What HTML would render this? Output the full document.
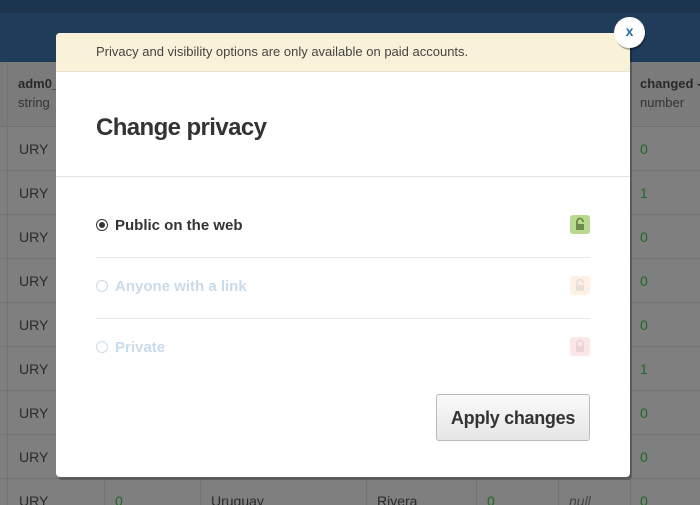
<!DOCTYPE html>
<html style="background:#7f7f7f"><head><meta charset="utf-8"><style>
*{margin:0;padding:0;box-sizing:border-box}
html,body{width:700px;height:505px;overflow:hidden}
body{position:relative;font-family:"Liberation Sans",Arial,sans-serif;background:#7f7f7f}
#w{position:absolute;left:0;top:0;width:700px;height:505px;overflow:hidden;background:#7f7f7f}
.top{position:absolute;left:0;top:0;width:700px;height:62px;background:#1f3c5a;border-top:13px solid #1b3550}
.hdr{position:absolute;left:0;top:62px;width:700px;height:65px;background:#7b7b7b;border-bottom:1px solid #6f6f6f}
.row{position:absolute;left:0;width:700px;height:44px;border-bottom:1px solid #737373;background:#7f7f7f}
.vl{position:absolute;top:62px;bottom:0;width:1px;background:#737373}
.t{position:absolute;font-size:14px;color:#2a2a2a;white-space:nowrap}
.g{color:#1d6a22}
.modal{position:absolute;left:56px;top:33px;width:574px;height:444px;background:#fff;border-radius:4px;box-shadow:2px 3px 0 rgba(0,0,0,.25)}
.banner{height:39px;background:#faf1d9;border-bottom:1px solid #e8e2d2;font-size:13px;color:#444;padding:11px 0 0 40px;border-radius:4px 4px 0 0}
h1{position:absolute;left:40px;top:81px;font-size:24px;font-weight:bold;color:#333;letter-spacing:-.6px}
.div{position:absolute;left:0;top:143px;width:574px;height:1px;background:#e4e4e4}
.opt{position:absolute;left:40px;width:494px;height:61px;font-size:15px;font-weight:bold}
.opt .r{position:absolute;left:0;top:0;width:12px;height:12px;border-radius:50%;border:1px solid #333}
.opt span{position:absolute;left:19px;top:-2px}
.lock{position:absolute;right:0;top:-4px;width:20px;height:19px;border-radius:3px}
.sep{position:absolute;left:40px;width:494px;height:1px;background:#e8e8e8}
.btn{position:absolute;left:380px;top:361px;width:154px;height:47px;border:1px solid #bbb;border-radius:3px;background:linear-gradient(#fafafa,#e6e6e6);font-size:18px;font-weight:bold;color:#333;text-align:center;line-height:47px;letter-spacing:-.3px}
.x{position:absolute;left:614px;top:17px;width:31px;height:31px;border-radius:50%;background:#fff;box-shadow:1px 2px 0 rgba(0,0,0,.3);color:#2b6ca8;font-size:14px;font-weight:bold;text-align:center;line-height:29px}
</style></head><body><div id="w">
<div class="top"></div>
<div class="hdr"></div>
<div class="row" style="top:127px"></div><div class="row" style="top:171px"></div><div class="row" style="top:215px"></div><div class="row" style="top:259px"></div><div class="row" style="top:303px"></div><div class="row" style="top:347px"></div><div class="row" style="top:391px"></div><div class="row" style="top:435px"></div><div class="row" style="top:479px"></div>
<div class="vl" style="left:7px"></div><div class="vl" style="left:104px"></div><div class="vl" style="left:200px"></div><div class="vl" style="left:366px"></div><div class="vl" style="left:476px"></div><div class="vl" style="left:558px"></div><div class="vl" style="left:630px"></div>
<div class="t" style="left:18px;top:76px;font-weight:bold;font-size:13px">adm0_</div><div class="t" style="left:18px;top:95px;font-size:13px;color:#333">string</div>
<div class="t" style="left:640px;top:76px;font-weight:bold;font-size:13px">changed -</div><div class="t" style="left:640px;top:95px;font-size:13px;color:#333">number</div>
<div class="t" style="left:19px;top:141px">URY</div><div class="t" style="left:19px;top:185px">URY</div><div class="t" style="left:19px;top:229px">URY</div><div class="t" style="left:19px;top:273px">URY</div><div class="t" style="left:19px;top:317px">URY</div><div class="t" style="left:19px;top:361px">URY</div><div class="t" style="left:19px;top:405px">URY</div><div class="t" style="left:19px;top:449px">URY</div><div class="t" style="left:19px;top:493px">URY</div>
<div class="t g" style="left:640px;top:141px">0</div><div class="t g" style="left:640px;top:185px">1</div><div class="t g" style="left:640px;top:229px">0</div><div class="t g" style="left:640px;top:273px">0</div><div class="t g" style="left:640px;top:317px">0</div><div class="t g" style="left:640px;top:361px">1</div><div class="t g" style="left:640px;top:405px">0</div><div class="t g" style="left:640px;top:449px">0</div><div class="t g" style="left:640px;top:493px">0</div>
<div class="t g" style="left:115px;top:493px">0</div><div class="t" style="left:211px;top:493px">Uruguay</div><div class="t" style="left:377px;top:493px">Rivera</div><div class="t g" style="left:487px;top:493px">0</div><div class="t" style="left:569px;top:493px;font-style:italic;color:#444">null</div>
<div class="modal">
<div class="banner">Privacy and visibility options are only available on paid accounts.</div>
<h1>Change privacy</h1>
<div class="div"></div>
<div class="opt" style="top:186px;color:#333"><div class="r"><div style="position:absolute;left:2px;top:2px;width:6px;height:6px;border-radius:50%;background:#333"></div></div><span>Public on the web</span>
<div class="lock" style="background:#b9d98f"><svg width="20" height="19" viewBox="0 0 20 19"><path d="M7 9V6.5a3 3 0 0 1 6 0V7" fill="none" stroke="#6b8a4d" stroke-width="1.8"/><rect x="6" y="9" width="8" height="6" fill="#6b8a4d"/></svg></div></div>
<div class="sep" style="top:224px"></div>
<div class="opt" style="top:247px;color:#c9dbeb"><div class="r" style="border-color:#c9dbeb"></div><span>Anyone with a link</span>
<div class="lock" style="background:#fdf0e4"><svg width="20" height="19" viewBox="0 0 20 19"><path d="M7 9V6.5a3 3 0 0 1 6 0V7" fill="none" stroke="#e8e0d8" stroke-width="1.8"/><rect x="6" y="9" width="8" height="6" fill="#e8e0d8"/></svg></div></div>
<div class="sep" style="top:285px"></div>
<div class="opt" style="top:308px;color:#c9dbeb"><div class="r" style="border-color:#c9dbeb"></div><span>Private</span>
<div class="lock" style="background:#fce6e6"><svg width="20" height="19" viewBox="0 0 20 19"><path d="M7 9V6.5a3 3 0 0 1 6 0V9" fill="none" stroke="#e8d6d6" stroke-width="1.8"/><rect x="6" y="9" width="8" height="6" fill="#e8d6d6"/></svg></div></div>
<div class="btn">Apply changes</div>
</div>
<div class="x">x</div>
</div></body></html>
